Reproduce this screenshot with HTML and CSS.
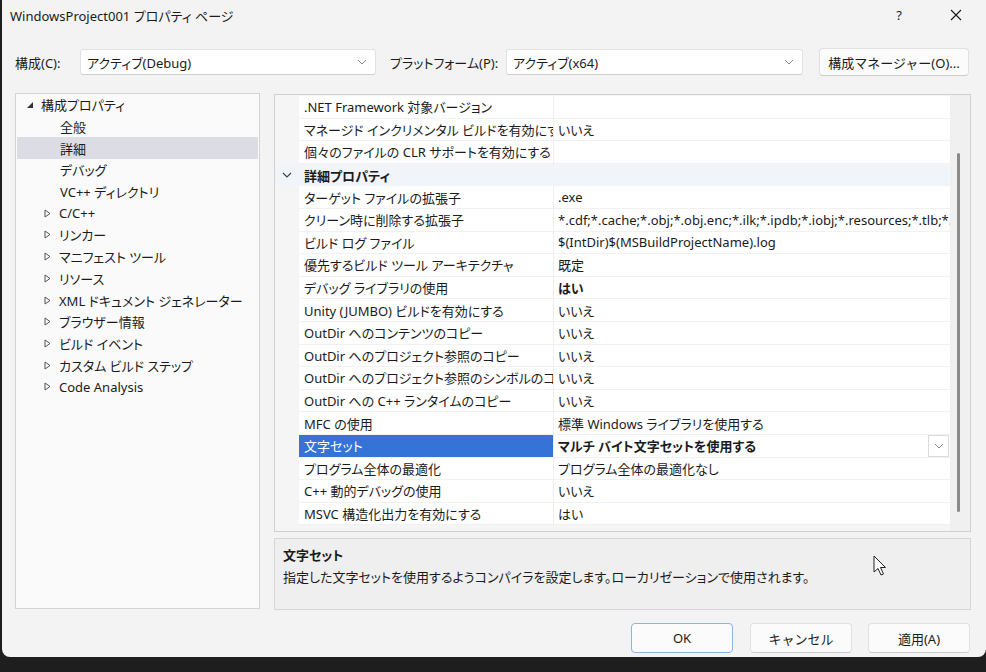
FILE: index.html
```html
<!DOCTYPE html>
<html lang="ja">
<head>
    <meta charset="UTF-8">
    <title>WindowsProject001 プロパティ ページ</title>
    <link rel="stylesheet" href="styles.css">
</head>
<body>
    <div class="window">
        <!-- Title bar -->
        <div class="titlebar">
            <span class="title">WindowsProject001 プロパティ ページ</span>
            <span class="tb-help">?</span>
            <span class="tb-close">
                <svg width="12" height="12" viewBox="0 0 12 12"><path d="M1 1 L11 11 M11 1 L1 11" stroke="#1a1a1a" stroke-width="1.1" fill="none"/></svg>
            </span>
        </div>

        <!-- Configuration / platform -->
        <div class="toolbar">
            <span class="tool-label label-config">構成(C):</span>
            <div class="combo combo-config">
                <span>アクティブ(Debug)</span>
                <svg class="chev" width="10" height="6" viewBox="0 0 10 6"><path d="M1 1 L5 5 L9 1" stroke="#8a8a8a" stroke-width="1" fill="none"/></svg>
            </div>
            <span class="tool-label label-platform">プラットフォーム(P):</span>
            <div class="combo combo-platform">
                <span>アクティブ(x64)</span>
                <svg class="chev" width="10" height="6" viewBox="0 0 10 6"><path d="M1 1 L5 5 L9 1" stroke="#8a8a8a" stroke-width="1" fill="none"/></svg>
            </div>
            <button class="btn btn-manager">構成マネージャー(O)...</button>
        </div>

        <div class="main">
            <!-- Left tree -->
            <div class="tree">
                <div class="tree-item root">
                    <svg class="tw" width="8" height="8" viewBox="0 0 8 8"><polygon points="7,1 7,7 1,7" fill="#333"/></svg>
                    <span>構成プロパティ</span>
                </div>
                <div class="tree-item leaf">全般</div>
                <div class="tree-item leaf selected">詳細</div>
                <div class="tree-item leaf">デバッグ</div>
                <div class="tree-item leaf">VC++ ディレクトリ</div>
                <div class="tree-item closed"><svg class="tw" width="7" height="9" viewBox="0 0 7 9"><polygon points="1,1 6,4.5 1,8" fill="none" stroke="#555" stroke-width="1"/></svg><span>C/C++</span></div>
                <div class="tree-item closed"><svg class="tw" width="7" height="9" viewBox="0 0 7 9"><polygon points="1,1 6,4.5 1,8" fill="none" stroke="#555" stroke-width="1"/></svg><span>リンカー</span></div>
                <div class="tree-item closed"><svg class="tw" width="7" height="9" viewBox="0 0 7 9"><polygon points="1,1 6,4.5 1,8" fill="none" stroke="#555" stroke-width="1"/></svg><span>マニフェスト ツール</span></div>
                <div class="tree-item closed"><svg class="tw" width="7" height="9" viewBox="0 0 7 9"><polygon points="1,1 6,4.5 1,8" fill="none" stroke="#555" stroke-width="1"/></svg><span>リソース</span></div>
                <div class="tree-item closed"><svg class="tw" width="7" height="9" viewBox="0 0 7 9"><polygon points="1,1 6,4.5 1,8" fill="none" stroke="#555" stroke-width="1"/></svg><span>XML ドキュメント ジェネレーター</span></div>
                <div class="tree-item closed"><svg class="tw" width="7" height="9" viewBox="0 0 7 9"><polygon points="1,1 6,4.5 1,8" fill="none" stroke="#555" stroke-width="1"/></svg><span>ブラウザー情報</span></div>
                <div class="tree-item closed"><svg class="tw" width="7" height="9" viewBox="0 0 7 9"><polygon points="1,1 6,4.5 1,8" fill="none" stroke="#555" stroke-width="1"/></svg><span>ビルド イベント</span></div>
                <div class="tree-item closed"><svg class="tw" width="7" height="9" viewBox="0 0 7 9"><polygon points="1,1 6,4.5 1,8" fill="none" stroke="#555" stroke-width="1"/></svg><span>カスタム ビルド ステップ</span></div>
                <div class="tree-item closed"><svg class="tw" width="7" height="9" viewBox="0 0 7 9"><polygon points="1,1 6,4.5 1,8" fill="none" stroke="#555" stroke-width="1"/></svg><span>Code Analysis</span></div>
            </div>

            <div class="right">
                <!-- Property grid -->
                <div class="grid">
                    <div class="grid-rows">
                        <div class="row"><div class="gutter"></div><div class="name"><span class="clip">.NET Framework 対象バージョン</span></div><div class="value"></div></div>
                        <div class="row"><div class="gutter"></div><div class="name"><span class="clip">マネージド インクリメンタル ビルドを有効にする</span></div><div class="value">いいえ</div></div>
                        <div class="row"><div class="gutter"></div><div class="name"><span class="clip">個々のファイルの CLR サポートを有効にする</span></div><div class="value"></div></div>
                        <div class="row category">
                            <div class="gutter"><svg width="10" height="6" viewBox="0 0 10 6"><path d="M1 1 L5 5 L9 1" stroke="#444" stroke-width="1.2" fill="none"/></svg></div>
                            <div class="cat-name">詳細プロパティ</div>
                        </div>
                        <div class="row"><div class="gutter"></div><div class="name"><span class="clip">ターゲット ファイルの拡張子</span></div><div class="value">.exe</div></div>
                        <div class="row"><div class="gutter"></div><div class="name"><span class="clip">クリーン時に削除する拡張子</span></div><div class="value"><span class="clip">*.cdf;*.cache;*.obj;*.obj.enc;*.ilk;*.ipdb;*.iobj;*.resources;*.tlb;*.tli;*.tlh;*.tmp;*.rsp;*.pgc;*.pgd</span></div></div>
                        <div class="row"><div class="gutter"></div><div class="name"><span class="clip">ビルド ログ ファイル</span></div><div class="value">$(IntDir)$(MSBuildProjectName).log</div></div>
                        <div class="row"><div class="gutter"></div><div class="name"><span class="clip">優先するビルド ツール アーキテクチャ</span></div><div class="value">既定</div></div>
                        <div class="row"><div class="gutter"></div><div class="name"><span class="clip">デバッグ ライブラリの使用</span></div><div class="value bold">はい</div></div>
                        <div class="row"><div class="gutter"></div><div class="name"><span class="clip">Unity (JUMBO) ビルドを有効にする</span></div><div class="value">いいえ</div></div>
                        <div class="row"><div class="gutter"></div><div class="name"><span class="clip">OutDir へのコンテンツのコピー</span></div><div class="value">いいえ</div></div>
                        <div class="row"><div class="gutter"></div><div class="name"><span class="clip">OutDir へのプロジェクト参照のコピー</span></div><div class="value">いいえ</div></div>
                        <div class="row"><div class="gutter"></div><div class="name"><span class="clip">OutDir へのプロジェクト参照のシンボルのコピー</span></div><div class="value">いいえ</div></div>
                        <div class="row"><div class="gutter"></div><div class="name"><span class="clip">OutDir への C++ ランタイムのコピー</span></div><div class="value">いいえ</div></div>
                        <div class="row"><div class="gutter"></div><div class="name"><span class="clip">MFC の使用</span></div><div class="value">標準 Windows ライブラリを使用する</div></div>
                        <div class="row selected">
                            <div class="gutter"></div>
                            <div class="name"><span class="clip">文字セット</span></div>
                            <div class="value bold">
                                <span>マルチ バイト文字セットを使用する</span>
                                <span class="drop"><svg width="10" height="6" viewBox="0 0 10 6"><path d="M1 1 L5 5 L9 1" stroke="#8a8a8a" stroke-width="1" fill="none"/></svg></span>
                            </div>
                        </div>
                        <div class="row"><div class="gutter"></div><div class="name"><span class="clip">プログラム全体の最適化</span></div><div class="value">プログラム全体の最適化なし</div></div>
                        <div class="row"><div class="gutter"></div><div class="name"><span class="clip">C++ 動的デバッグの使用</span></div><div class="value">いいえ</div></div>
                        <div class="row"><div class="gutter"></div><div class="name"><span class="clip">MSVC 構造化出力を有効にする</span></div><div class="value">はい</div></div>
                    </div>
                    <div class="scrollbar"><div class="thumb"></div></div>
                </div>

                <!-- Description -->
                <div class="desc">
                    <div class="desc-title">文字セット</div>
                    <div class="desc-text">指定した文字セットを使用するようコンパイラを設定します。ローカリゼーションで使用されます。</div>
                </div>
            </div>
        </div>

        <!-- Dialog buttons -->
        <div class="actions">
            <button class="btn btn-action default">OK</button>
            <button class="btn btn-action">キャンセル</button>
            <button class="btn btn-action">適用(A)</button>
        </div>

        <!-- Mouse pointer -->
        <svg class="cursor" width="14" height="22" viewBox="0 0 14 22"><path d="M1 1 L1 17 L5 13.5 L8 20 L10.5 19 L7.5 12.5 L12.5 12.5 Z" fill="#fff" stroke="#222" stroke-width="1" stroke-linejoin="round"/></svg>
    </div>
</body>
</html>
```

FILE: styles.css
```css
body {
    margin: 0;
    padding: 0;
    background: #1e1e1e;
    overflow: hidden;
    font-family: "Noto Sans", "Noto Sans CJK JP", sans-serif;
    font-size: 13px;
    color: #1b1b1b;
    font-feature-settings: "palt";
}
.window {
    position: relative;
    margin-left: 2px;
    width: 984px;
    height: 657px;
    background: #f3f3f3;
    border-radius: 0 0 8px 8px;
    overflow: hidden;
}
.titlebar {
    height: 30px;
    display: flex;
    align-items: center;
    padding-left: 8px;
    padding-right: 7px;
}
.title {
    flex: 1;
    font-size: 13px;
}
.tb-help {
    width: 46px;
    margin-right: 11px;
    text-align: center;
    font-size: 13px;
}
.tb-close {
    width: 46px;
    display: flex;
    justify-content: center;
}
.toolbar {
    margin-top: 18px;
    height: 28px;
    display: flex;
    align-items: center;
    padding-left: 13px;
}
.tool-label {
    white-space: nowrap;
}
.label-config {
    width: 65px;
}
.label-platform {
    width: 116px;
    margin-left: 14px;
}
.combo {
    height: 24px;
    background: #fff;
    border: 1px solid #e2e2e2;
    border-bottom-color: #cfcfcf;
    border-radius: 3px;
    display: flex;
    align-items: center;
    justify-content: space-between;
    padding: 0 8px 0 6px;
    box-sizing: content-box;
}
.combo-config {
    width: 280px;
}
.combo-platform {
    width: 281px;
}
.btn {
    font-family: inherit;
    font-size: 13px;
    color: #1b1b1b;
    background: #fbfbfb;
    border: 1px solid #e0e0e0;
    border-bottom-color: #cccccc;
    border-radius: 4px;
    padding: 0;
}
.btn-manager {
    margin-left: 16px;
    width: 150px;
    height: 28px;
}
.main {
    margin-top: 17px;
    display: flex;
    padding-left: 13px;
}
.tree {
    width: 243px;
    height: 514px;
    background: #fafafa;
    border: 1px solid #d3d3d3;
}
.tree-item {
    height: 21.7px;
    display: flex;
    align-items: center;
    white-space: nowrap;
}
.tree-item.root {
    padding-left: 10px;
}
.tree-item.root .tw {
    margin-right: 7px;
}
.tree-item.leaf {
    padding-left: 44px;
}
.tree-item.closed {
    padding-left: 28px;
}
.tree-item.closed .tw {
    margin-right: 8px;
}
.tree-item.selected {
    background: #dcdde4;
    margin: 0 1px;
    padding-left: 43px;
}
.right {
    margin-left: 14px;
    margin-top: 1px;
    width: 697px;
}
.grid {
    height: 436px;
    border: 1px solid #d0d0d0;
    background: #f5f5f5;
    display: flex;
}
.grid-rows {
    width: 675px;
    padding-top: 1px;
}
.row {
    height: 22.6px;
    display: flex;
    background: #fff;
}
.gutter {
    width: 24px;
    flex-shrink: 0;
    background: #f5f5f5;
    display: flex;
    align-items: center;
    justify-content: center;
}
.name {
    width: 249px;
    flex-shrink: 0;
    padding-left: 5px;
    border-right: 1px solid #eeeeee;
    border-bottom: 1px solid #f1f1f1;
    white-space: nowrap;
    overflow: hidden;
    display: flex;
    align-items: center;
}
.value {
    flex: 1;
    min-width: 0;
    padding-left: 4px;
    border-bottom: 1px solid #f1f1f1;
    white-space: nowrap;
    overflow: hidden;
    display: flex;
    align-items: center;
}
.clip {
    display: block;
    max-width: 100%;
    overflow: hidden;
    white-space: nowrap;
}
.bold {
    font-weight: bold;
}
.row.category {
    background: #f1f4f9;
}
.row.category .gutter {
    background: #f1f4f9;
}
.cat-name {
    padding-left: 5px;
    font-weight: bold;
    display: flex;
    align-items: center;
}
.row.selected .name {
    background: #3574d6;
    color: #fff;
}
.row.selected .value {
    justify-content: space-between;
}
.drop {
    width: 19px;
    height: 20px;
    border: 1px solid #dcdcdc;
    background: #fff;
    display: flex;
    align-items: center;
    justify-content: center;
    margin-right: 1px;
}
.scrollbar {
    flex: 1;
    background: #f0f0f0;
    position: relative;
}
.thumb {
    position: absolute;
    left: 7px;
    top: 58px;
    width: 3px;
    height: 359px;
    border-radius: 2px;
    background: #8a8a8a;
}
.desc {
    margin-top: 6px;
    height: 60px;
    border: 1px solid #d6d6d6;
    background: #efefef;
    padding: 5px 8px 5px 8px;
}
.desc-title {
    font-weight: bold;
    height: 22px;
    line-height: 22px;
}
.desc-text {
    height: 22px;
    line-height: 22px;
    font-size: 13px;
}
.actions {
    margin-top: 13px;
    display: flex;
    justify-content: flex-end;
    gap: 16px;
    padding-right: 16px;
}
.btn-action {
    width: 102px;
    height: 30px;
}
.btn-action.default {
    border-color: #8fb2e0;
    margin-right: 1px;
}
.cursor {
    position: absolute;
    left: 871px;
    top: 555px;
}
```
